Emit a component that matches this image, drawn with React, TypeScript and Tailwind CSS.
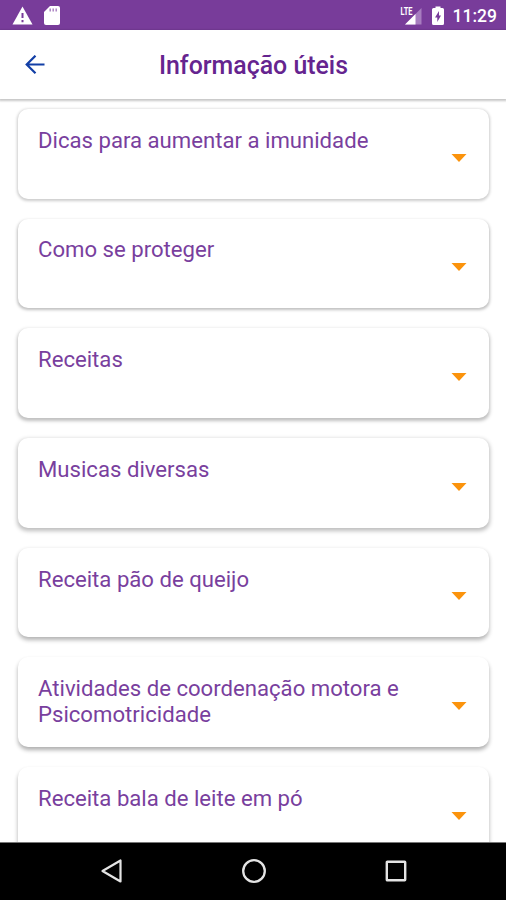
import { useState } from "react";

const topics = [
  { title: "Dicas para aumentar a imunidade", shadow: "shadow-[0_1px_3px_1px_rgba(0,0,0,0.2)]" },
  { title: "Como se proteger", shadow: "shadow-[0_1.5px_3px_0.5px_rgba(0,0,0,0.25)]" },
  { title: "Receitas", shadow: "shadow-[0_2px_3.5px_0.5px_rgba(0,0,0,0.25)]" },
  { title: "Musicas diversas", shadow: "shadow-[0_2px_4px_0.5px_rgba(0,0,0,0.26)]" },
  { title: "Receita pão de queijo", shadow: "shadow-[0_2.5px_4px_0_rgba(0,0,0,0.3)]" },
  {
    title: "Atividades de coordenação motora e Psicomotricidade",
    shadow: "shadow-[0_3px_4px_0_rgba(0,0,0,0.32)]",
  },
  { title: "Receita bala de leite em pó", shadow: "shadow-[0_3px_4px_0_rgba(0,0,0,0.32)]" },
];

function StatusBar() {
  return (
    <div className="flex h-[30px] shrink-0 items-center justify-between bg-[#783c9a] pr-[9px] pl-3 text-white">
      <div className="flex items-center gap-[11px]">
        <svg viewBox="0 0 21 19" className="h-[19px] w-[21px]">
          <path d="M10.5 0.5L20.5 18.5H0.5Z" fill="currentColor" />
          <path d="M10.5 7v5M10.5 14v2.2" stroke="#783c9a" strokeWidth="2" />
        </svg>
        <svg viewBox="0 0 16 19" className="h-[19px] w-4">
          <path d="M6 0H14Q16 0 16 2V17Q16 19 14 19H2Q0 19 0 17V6Z" fill="currentColor" />
          <path d="M6.2 2.5v3M9.2 2.5v3M12.2 2.5v3" stroke="#a77dbf" strokeWidth="1.4" />
        </svg>
      </div>
      <div className="flex items-center">
        <svg viewBox="0 0 22 19" className="h-[19px] w-[22px]">
          <path d="M21.5 2V18.5H5Z" fill="#a77dbf" />
          <path d="M15.5 8V18.5H5Z" fill="currentColor" />
          <text
            x="0.5"
            y="8.5"
            textLength="12"
            lengthAdjust="spacingAndGlyphs"
            fill="currentColor"
            fontSize="10"
            fontWeight="700"
          >
            LTE
          </text>
        </svg>
        <svg viewBox="0 0 12 19" className="ml-[10px] h-[19px] w-3">
          <path d="M3.5 0.5H8.5V2H10.5Q12 2 12 3.5V17.5Q12 19 10.5 19H1.5Q0 19 0 17.5V3.5Q0 2 1.5 2H3.5Z" fill="currentColor" />
          <path d="M7 5L3 11.5H5.3V16L9 9.5H7Z" fill="#783c9a" />
        </svg>
        <span className="ml-[9px] pt-[2px] text-[17.5px] leading-[28px] font-medium">11:29</span>
      </div>
    </div>
  );
}

function Header() {
  return (
    <header className="relative z-10 flex h-[69px] shrink-0 items-center justify-center bg-white shadow-[0_1px_2px_1px_rgba(0,0,0,0.22)]">
      <button className="absolute top-[25px] left-[25px] text-[#123fa6]" aria-label="Voltar">
        <svg viewBox="0 0 20 20" className="h-5 w-5" fill="none" stroke="currentColor" strokeWidth="2.2">
          <path d="M19.5 9.5H2M10.5 0.7L1.7 9.5L10.5 18.3" />
        </svg>
      </button>
      <h1 className="pt-[3px] pl-px text-[24.9px] font-medium text-[#65248f]">Informação úteis</h1>
    </header>
  );
}

type TopicCardProps = {
  title: string;
  shadow: string;
  open: boolean;
  onToggle: () => void;
};

function TopicCard({ title, shadow, open, onToggle }: TopicCardProps) {
  return (
    <button
      className={`flex h-[89.7px] w-full shrink-0 items-start justify-between rounded-[10px] bg-white pr-[22px] pl-5 text-left ${shadow}`}
      onClick={onToggle}
      aria-expanded={open}
    >
      <span className="w-[385px] pt-[18.9px] text-[22.15px] leading-[25.7px] text-[#793f9e]">{title}</span>
      <svg
        viewBox="0 0 16 8"
        className={`mt-[44.7px] h-2 w-4 ${open ? "rotate-180" : ""}`}
      >
        <path d="M0.5 0H15.5L8 8Z" fill="#fb930c" />
      </svg>
    </button>
  );
}

function NavBar() {
  return (
    <nav className="relative z-10 flex h-[58.5px] shrink-0 items-center justify-between border-t border-[#777] bg-black pr-[98px] pl-[100px]">
      <svg viewBox="0 0 24 26" className="h-[26px] w-6" fill="none" stroke="#e4e4e4" strokeWidth="2.2">
        <path d="M20.5 2.5V23.5L2.5 13Z" strokeLinejoin="round" />
      </svg>
      <svg viewBox="0 0 26 26" className="h-[26px] w-[26px]" fill="none" stroke="#e4e4e4" strokeWidth="2.3">
        <circle cx="13" cy="13" r="10.8" />
      </svg>
      <svg viewBox="0 0 24 24" className="h-6 w-6" fill="none" stroke="#e4e4e4" strokeWidth="2.4">
        <rect x="2.8" y="2.8" width="18.4" height="18.4" rx="0.5" />
      </svg>
    </nav>
  );
}

export default function App() {
  const [openTopic, setOpenTopic] = useState<number | null>(null);

  return (
    <div className="flex h-[900px] w-[506px] flex-col overflow-hidden bg-white font-[Roboto,sans-serif]">
      <StatusBar />
      <Header />
      <main className="flex min-h-0 flex-1 flex-col gap-5 overflow-hidden pt-[9.9px] pr-[17px] pl-[18px]">
        {topics.map((topic, i) => (
          <TopicCard
            key={topic.title}
            title={topic.title}
            shadow={topic.shadow}
            open={openTopic === i}
            onToggle={() => setOpenTopic(openTopic === i ? null : i)}
          />
        ))}
      </main>
      <NavBar />
    </div>
  );
}
